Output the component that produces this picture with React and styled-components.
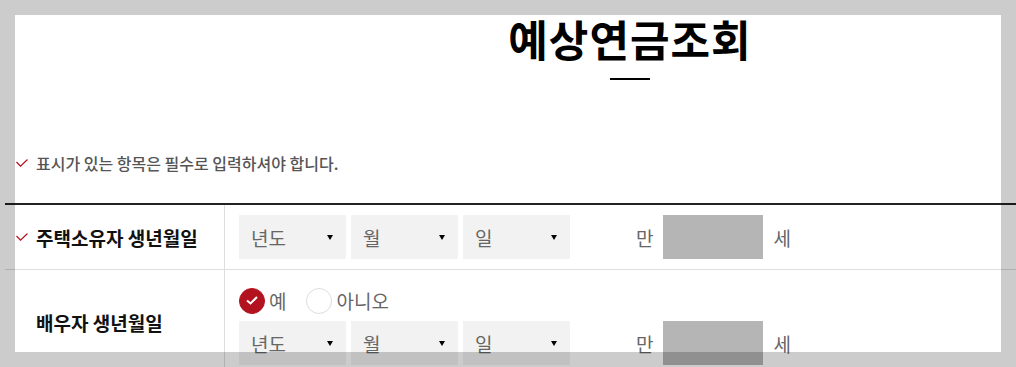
import React, { useState } from "react";
import styled, { createGlobalStyle } from "styled-components";

const GlobalStyle = createGlobalStyle`
  html, body {
    margin: 0;
    padding: 0;
    overflow: hidden;
    background: #fff;
  }
  body {
    font-family: "Noto Sans CJK KR", "Noto Sans", sans-serif;
  }
`;

const RED = "#b3121f";

export default function App() {
  const [spouse, setSpouse] = useState(true);

  return (
    <>
      <GlobalStyle />
      <Page>
        <Header>
          <Title>예상연금조회</Title>
          <TitleBar />
        </Header>

        <Notice>
          <CheckMark />
          표시가 있는 항목은 필수로 입력하셔야 합니다.
        </Notice>

        <FormTable>
          <Row>
            <Label required>
              <CheckMark />
              주택소유자 생년월일
            </Label>
            <Value>
              <BirthFields />
            </Value>
          </Row>
          <Row>
            <Label>배우자 생년월일</Label>
            <Value>
              <RadioGroup>
                <Radio onClick={() => setSpouse(true)}>
                  <RadioDot checked={spouse}>{spouse && <DotCheck />}</RadioDot>
                  예
                </Radio>
                <Radio onClick={() => setSpouse(false)}>
                  <RadioDot checked={!spouse}>{!spouse && <DotCheck />}</RadioDot>
                  아니오
                </Radio>
              </RadioGroup>
              <BirthFields />
            </Value>
          </Row>
        </FormTable>
      </Page>
      <Frame />
    </>
  );
}

function BirthFields() {
  return (
    <Fields>
      <Select>
        년도
        <Arrow />
      </Select>
      <Select>
        월
        <Arrow />
      </Select>
      <Select>
        일
        <Arrow />
      </Select>
      <Age>
        <span>만</span>
        <AgeBox />
        <span>세</span>
      </Age>
    </Fields>
  );
}

function DotCheck() {
  return (
    <svg width="12" height="9" viewBox="0 0 12 9">
      <polyline
        points="1,4.5 4.5,7.5 11,1"
        fill="none"
        stroke="#fff"
        strokeWidth="2"
      />
    </svg>
  );
}

function CheckMark() {
  return (
    <CheckIcon width="12" height="8" viewBox="0 0 12 8">
      <polyline
        points="0.5,3 4.5,7.2 11.5,0.5"
        fill="none"
        stroke={RED}
        strokeWidth="1.2"
      />
    </CheckIcon>
  );
}

const Page = styled.div`
  width: 1250px;
  margin-left: 5px;
`;

const Header = styled.div`
  display: flex;
  flex-direction: column;
  align-items: center;
  padding-top: 14px;
`;

const Title = styled.h1`
  margin: 0;
  font-size: 43px;
  line-height: 48px;
  font-weight: 700;
  letter-spacing: 1px;
  color: #000;
`;

const TitleBar = styled.div`
  width: 40px;
  height: 2px;
  background: #000;
  margin-top: 16px;
`;

const Notice = styled.p`
  display: flex;
  align-items: center;
  gap: 8px;
  margin: 73px 0 30px;
  padding-left: 11px;
  height: 20px;
  font-size: 16px;
  line-height: 20px;
  font-weight: 500;
  color: #555;
`;

const CheckIcon = styled.svg`
  flex: none;
  display: block;
`;

const FormTable = styled.div`
  border-top: 2px solid #222;
`;

const Row = styled.div`
  display: flex;
  border-bottom: 1px solid #ddd;
`;

const Label = styled.div`
  flex: none;
  width: 220px;
  box-sizing: border-box;
  display: flex;
  align-items: center;
  gap: 8px;
  padding-left: ${(p) => (p.required ? "11px" : "31px")};
  border-right: 1px solid #ddd;
  font-size: 19px;
  font-weight: 700;
  color: #111;
`;

const Value = styled.div`
  flex: 1;
  padding: 10px 14px;
`;

const RadioGroup = styled.div`
  display: flex;
  align-items: center;
  gap: 20px;
  height: 41px;
`;

const Radio = styled.label`
  display: flex;
  align-items: center;
  gap: 4px;
  font-size: 19px;
  color: #666;
  cursor: pointer;
`;

const RadioDot = styled.span`
  width: 26px;
  height: 26px;
  box-sizing: border-box;
  border-radius: 50%;
  display: flex;
  align-items: center;
  justify-content: center;
  background: ${(p) => (p.checked ? RED : "#fff")};
  border: 1px solid ${(p) => (p.checked ? RED : "#ddd")};
`;

const Fields = styled.div`
  display: flex;
  align-items: center;
  gap: 5px;
`;

const Select = styled.div`
  width: 107px;
  height: 44px;
  box-sizing: border-box;
  display: flex;
  align-items: center;
  justify-content: space-between;
  padding: 0 13px 0 12px;
  background: #f2f2f2;
  font-size: 19px;
  color: #666;
`;

const Arrow = styled.span`
  width: 0;
  height: 0;
  border-left: 3px solid transparent;
  border-right: 3px solid transparent;
  border-top: 5px solid #000;
`;

const Age = styled.div`
  display: flex;
  align-items: center;
  gap: 10px;
  margin-left: 61px;
  font-size: 19px;
  color: #666;
`;

const AgeBox = styled.div`
  width: 100px;
  height: 44px;
  background: #b5b5b5;
`;

const Frame = styled.div`
  position: fixed;
  inset: 0;
  border: 15px solid rgba(0, 0, 0, 0.2);
  pointer-events: none;
`;
